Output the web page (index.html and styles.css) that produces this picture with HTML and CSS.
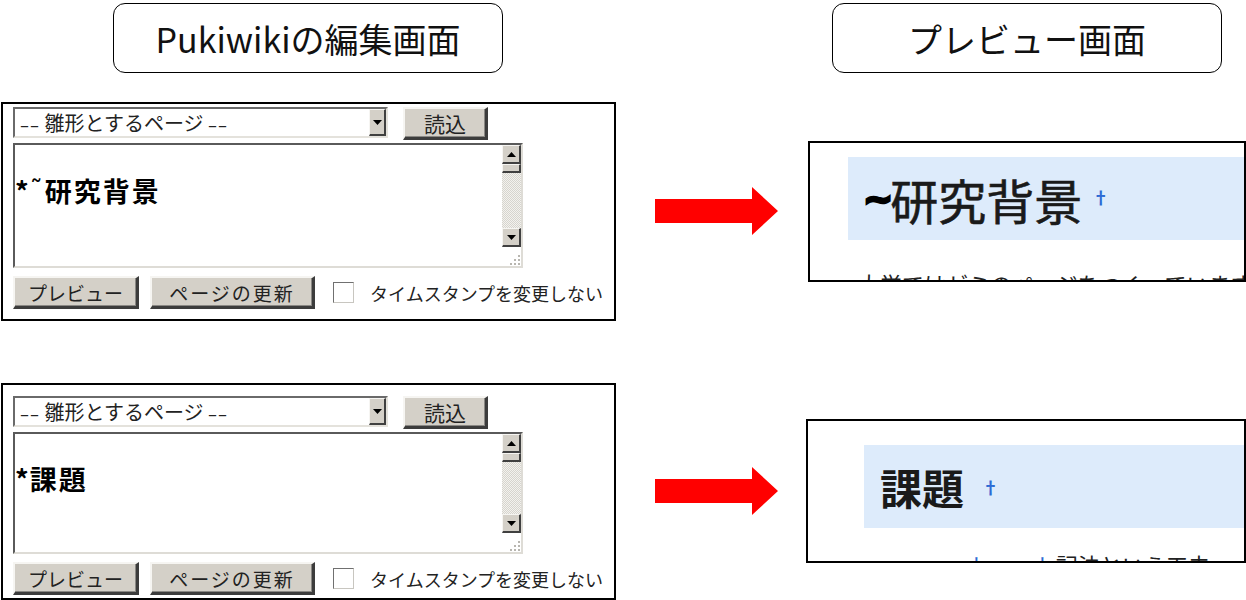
FILE: index.html
```html
<!DOCTYPE html>
<html lang="ja">
<head>
    <meta charset="UTF-8">
    <title>Pukiwiki 見出しの編集とプレビュー</title>
    <link rel="stylesheet" href="styles.css">
</head>
<body>
<div class="page">
    <div class="labels">
        <div class="label label-edit">Pukiwikiの編集画面</div>
        <div class="label label-preview">プレビュー画面</div>
    </div>

    <!-- 1段目: *~研究背景 -->
    <div class="row row-first">
        <div class="editor">
            <div class="editor-top">
                <div class="select">
                    <span class="select-text"><span class="dash">––</span> 雛形とするページ <span class="dash">––</span></span>
                    <span class="select-btn">
                        <svg width="9" height="5" viewBox="0 0 9 5"><polygon points="0,0 9,0 4.5,5" fill="#000"/></svg>
                    </span>
                </div>
                <div class="btn btn-load">読込</div>
            </div>
            <div class="textarea">
                <div class="textarea-text"><span class="star">*</span><span class="small-tilde">˜</span>研究背景</div>
                <div class="scrollbar">
                    <div class="sb-btn"><svg width="9" height="5" viewBox="0 0 9 5"><polygon points="0,5 9,5 4.5,0" fill="#000"/></svg></div>
                    <div class="sb-thumb"></div>
                    <div class="sb-track"></div>
                    <div class="sb-btn"><svg width="9" height="5" viewBox="0 0 9 5"><polygon points="0,0 9,0 4.5,5" fill="#000"/></svg></div>
                    <div class="grip">
                        <svg width="12" height="12" viewBox="0 0 12 12" fill="#b8b6b0">
                            <rect x="9" y="1" width="2" height="2"/>
                            <rect x="5" y="5" width="2" height="2"/><rect x="9" y="5" width="2" height="2"/>
                            <rect x="1" y="9" width="2" height="2"/><rect x="5" y="9" width="2" height="2"/><rect x="9" y="9" width="2" height="2"/>
                        </svg>
                    </div>
                </div>
            </div>
            <div class="editor-bottom">
                <div class="btn btn-preview">プレビュー</div>
                <div class="btn btn-update">ページの更新</div>
                <span class="checkbox"></span>
                <span class="check-label">タイムスタンプを変更しない</span>
            </div>
        </div>

        <div class="arrow">
            <svg width="123" height="48" viewBox="0 0 123 48"><polygon points="0,12 97,12 97,0 123,24 97,48 97,36 0,36" fill="#ff0000"/></svg>
        </div>

        <div class="preview">
            <div class="preview-heading">
                <span class="wave">~</span><span class="heading-text">研究背景</span><span class="mark">†</span>
            </div>
            <p class="preview-text">大学ではゼミのページをつくっています</p>
        </div>
    </div>

    <!-- 2段目: *課題 -->
    <div class="row row-second">
        <div class="editor">
            <div class="editor-top">
                <div class="select">
                    <span class="select-text"><span class="dash">––</span> 雛形とするページ <span class="dash">––</span></span>
                    <span class="select-btn">
                        <svg width="9" height="5" viewBox="0 0 9 5"><polygon points="0,0 9,0 4.5,5" fill="#000"/></svg>
                    </span>
                </div>
                <div class="btn btn-load">読込</div>
            </div>
            <div class="textarea">
                <div class="textarea-text"><span class="star">*</span>課題</div>
                <div class="scrollbar">
                    <div class="sb-btn"><svg width="9" height="5" viewBox="0 0 9 5"><polygon points="0,5 9,5 4.5,0" fill="#000"/></svg></div>
                    <div class="sb-thumb"></div>
                    <div class="sb-track"></div>
                    <div class="sb-btn"><svg width="9" height="5" viewBox="0 0 9 5"><polygon points="0,0 9,0 4.5,5" fill="#000"/></svg></div>
                    <div class="grip">
                        <svg width="12" height="12" viewBox="0 0 12 12" fill="#b8b6b0">
                            <rect x="9" y="1" width="2" height="2"/>
                            <rect x="5" y="5" width="2" height="2"/><rect x="9" y="5" width="2" height="2"/>
                            <rect x="1" y="9" width="2" height="2"/><rect x="5" y="9" width="2" height="2"/><rect x="9" y="9" width="2" height="2"/>
                        </svg>
                    </div>
                </div>
            </div>
            <div class="editor-bottom">
                <div class="btn btn-preview">プレビュー</div>
                <div class="btn btn-update">ページの更新</div>
                <span class="checkbox"></span>
                <span class="check-label">タイムスタンプを変更しない</span>
            </div>
        </div>

        <div class="arrow">
            <svg width="123" height="48" viewBox="0 0 123 48"><polygon points="0,12 97,12 97,0 123,24 97,48 97,36 0,36" fill="#ff0000"/></svg>
        </div>

        <div class="preview">
            <div class="preview-heading">
                <span class="heading-text">課題</span><span class="mark">†</span>
            </div>
            <p class="preview-text"><span class="link">ト</span>　　<span class="link">ト</span>記法という工夫</p>
        </div>
    </div>
</div>
</body>
</html>
```

FILE: styles.css
```css
body {
    margin: 0;
    background: #fff;
    color: #000;
    font-family: "Noto Sans CJK JP", "Noto Sans", sans-serif;
}
.page {
    width: 1246px;
    height: 600px;
    overflow: hidden;
    padding-top: 3px;
    box-sizing: border-box;
}

/* 見出しラベル */
.labels {
    display: flex;
}
.label {
    width: 390px;
    height: 70px;
    box-sizing: border-box;
    border: 1.5px solid #000;
    border-radius: 12px;
    display: flex;
    align-items: center;
    justify-content: center;
    font-size: 34px;
    color: #111;
}
.label-edit {
    margin-left: 113px;
}
.label-preview {
    margin-left: 329px;
}

/* 段 */
.row {
    display: flex;
    align-items: flex-start;
}
.row-first {
    margin-top: 29px;
}
.row-second {
    margin-top: 62px;
}

/* 編集フォーム */
.editor {
    margin-left: 1px;
    width: 615px;
    height: 219px;
    box-sizing: border-box;
    border: 2px solid #000;
    padding: 3px 0 0 10px;
}
.row-second .editor {
    height: 217px;
    padding-top: 11px;
}
.editor-top {
    display: flex;
    align-items: flex-start;
}
.select {
    width: 375px;
    height: 31px;
    box-sizing: border-box;
    border-style: solid;
    border-width: 2px;
    border-color: #6a6a6a #e4e2dc #e4e2dc #6a6a6a;
    background: #fff;
    display: flex;
}
.select-text {
    flex: 1;
    padding-left: 5px;
    font-size: 20px;
    line-height: 27px;
    color: #222;
    white-space: nowrap;
}
.dash {
    font-family: "DejaVu Sans", sans-serif;
    font-size: 18px;
    letter-spacing: 1px;
}
.select-btn {
    width: 17px;
    box-sizing: border-box;
    background: #d4d0c8;
    border-style: solid;
    border-width: 1px 2px 2px 1px;
    border-color: #f6f5f2 #404040 #404040 #f6f5f2;
    display: flex;
    align-items: center;
    justify-content: center;
}
.btn {
    background: #d4d0c8;
    box-sizing: border-box;
    border-style: solid;
    border-width: 2px 3px 3px 2px;
    border-color: #f6f5f2 #3c3c3c #3c3c3c #f6f5f2;
    box-shadow: inset -1px -1px 0 #8a8884;
    display: flex;
    align-items: center;
    justify-content: center;
    font-size: 19px;
    color: #222;
    white-space: nowrap;
}
.btn-load {
    margin-left: 15px;
    width: 85px;
    height: 33px;
    font-size: 21px;
}
.textarea {
    margin-top: 3px;
    width: 510px;
    height: 125px;
    box-sizing: border-box;
    border-style: solid;
    border-width: 2px;
    border-color: #5a5a5a #dedcd6 #dedcd6 #5a5a5a;
    display: flex;
}
.row-second .textarea {
    height: 122px;
}
.textarea-text {
    flex: 1;
    padding-top: 30px;
    font-size: 27px;
    font-weight: bold;
    line-height: 30px;
    letter-spacing: 2px;
    white-space: nowrap;
}
.star {
    letter-spacing: 0;
    margin-right: 1px;
}
.small-tilde {
    font-weight: normal;
    font-family: "DejaVu Sans", sans-serif;
    font-size: 26px;
    letter-spacing: 0;
    margin-right: 2px;
    vertical-align: 3px;
}
.scrollbar {
    width: 19px;
    display: flex;
    flex-direction: column;
}
.sb-btn,
.sb-thumb {
    height: 19px;
    box-sizing: border-box;
    background: #d4d0c8;
    border-style: solid;
    border-width: 1px 2px 2px 1px;
    border-color: #f6f5f2 #404040 #404040 #f6f5f2;
    display: flex;
    align-items: center;
    justify-content: center;
}
.sb-thumb {
    height: 9px;
}
.sb-track {
    flex: 1;
    background: repeating-conic-gradient(#d6d4ce 0 25%, #f3f2ee 0 50%) 0 0 / 2px 2px;
}
.grip {
    height: 19px;
    display: flex;
    align-items: flex-end;
    justify-content: flex-end;
    background: #fff;
}
.editor-bottom {
    margin-top: 8px;
    display: flex;
    align-items: center;
}
.btn-preview {
    width: 126px;
    height: 33px;
}
.btn-update {
    margin-left: 11px;
    width: 165px;
    height: 33px;
    letter-spacing: 2px;
}
.checkbox {
    margin-left: 18px;
    width: 21px;
    height: 21px;
    box-sizing: border-box;
    border-style: solid;
    border-width: 1px;
    border-color: #707070 #c8c6c0 #c8c6c0 #707070;
    background: #fff;
}
.check-label {
    margin-left: 16px;
    font-size: 18px;
    color: #222;
    white-space: nowrap;
}

/* 矢印 */
.arrow {
    margin-left: 39px;
    margin-top: 85px;
    width: 123px;
    height: 48px;
}
.row-second .arrow {
    margin-top: 84px;
}

/* プレビュー */
.preview {
    margin-left: 30px;
    margin-top: 39px;
    width: 438px;
    height: 141px;
    box-sizing: border-box;
    border: 2px solid #000;
    overflow: hidden;
}
.row-second .preview {
    margin-left: 28px;
    margin-top: 36px;
    width: 440px;
    height: 144px;
}
.preview-heading {
    margin: 14px 0 0 38px;
    height: 83px;
    padding-left: 15px;
    background: #ddebfb;
    display: flex;
    align-items: center;
    white-space: nowrap;
    color: #1a1a1a;
}
.row-second .preview-heading {
    margin: 24px 0 0 56px;
    padding-left: 16px;
}
.wave {
    font-family: "DejaVu Sans", sans-serif;
    font-weight: bold;
    font-size: 36px;
    color: #000;
    -webkit-text-stroke: 2.5px #000;
    margin-right: -3px;
}
.heading-text {
    font-size: 48px;
    -webkit-text-stroke: 0.6px #1a1a1a;
}
.row-second .heading-text {
    font-size: 42px;
    font-weight: bold;
    -webkit-text-stroke: 0;
}
.mark {
    align-self: flex-start;
    margin-top: 27px;
    margin-left: 10px;
    font-size: 17px;
    font-weight: bold;
    color: #2d6bd4;
}
.row-second .mark {
    margin-top: 29px;
    margin-left: 18px;
}
.preview-text {
    margin: 28px 0 0 48px;
    font-size: 22px;
    line-height: 30px;
    color: #222;
    white-space: nowrap;
}
.row-second .preview-text {
    margin: 21px 0 0 160px;
}
.link {
    color: #2d6bd4;
}
```
